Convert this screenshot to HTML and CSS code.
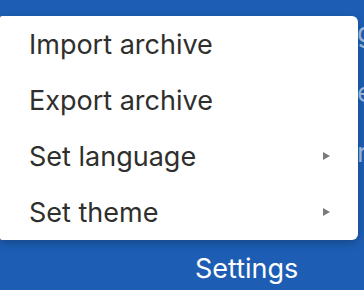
FILE: index.html
```html
<!DOCTYPE html>
<html>
<head>
<meta charset="utf-8">
<link rel="stylesheet" href="styles.css">
</head>
<body>
<div class="screen">
  <ul class="behind">
    <li>gmail</li>
    <li>email</li>
    <li>remote</li>
  </ul>
  <div class="footer">
    <span class="settings">Settings</span>
  </div>
  <ul class="menu">
    <li class="item"><span>Import archive</span></li>
    <li class="item"><span>Export archive</span></li>
    <li class="item"><span>Set language</span><span class="arrow"></span></li>
    <li class="item"><span>Set theme</span><span class="arrow"></span></li>
  </ul>
</div>
</body>
</html>
```

FILE: styles.css
```css
html, body {
  margin: 0;
  padding: 0;
}
body {
  background: #1d5eb4;
  font-family: Inter, "Noto Sans", "Liberation Sans", sans-serif;
  width: 364px;
  height: 290px;
  overflow: hidden;
}
.screen {
  position: relative;
  width: 364px;
  height: 290px;
  display: flex;
  flex-direction: column;
  overflow: hidden;
}
.behind {
  list-style: none;
  margin: 0;
  padding: 3px 0 0 357px;
  color: rgba(255, 255, 255, 0.6);
  font-size: 27px;
  line-height: 60px;
  white-space: nowrap;
  flex: 1;
}
.footer {
  display: flex;
  padding: 0 0 2px 195px;
  height: 50px;
  align-items: center;
}
.settings {
  color: #fff;
  font-size: 27px;
  padding-top: 10px;
}
.menu {
  position: absolute;
  top: 16px;
  left: 0;
  width: 358px;
  margin: 0;
  padding: 0;
  list-style: none;
  background: #fff;
  border-radius: 2px 6px 6px 2px;
  box-shadow: 0 3px 8px rgba(0, 0, 0, 0.25);
}
.item {
  height: 56px;
  display: flex;
  align-items: center;
  justify-content: space-between;
  padding: 0 28px 0 29px;
  color: #2f2f2d;
  font-size: 27px;
}
.arrow {
  width: 0;
  height: 0;
  border-top: 4px solid transparent;
  border-bottom: 4px solid transparent;
  border-left: 7px solid #7a7a7a;
}
```
